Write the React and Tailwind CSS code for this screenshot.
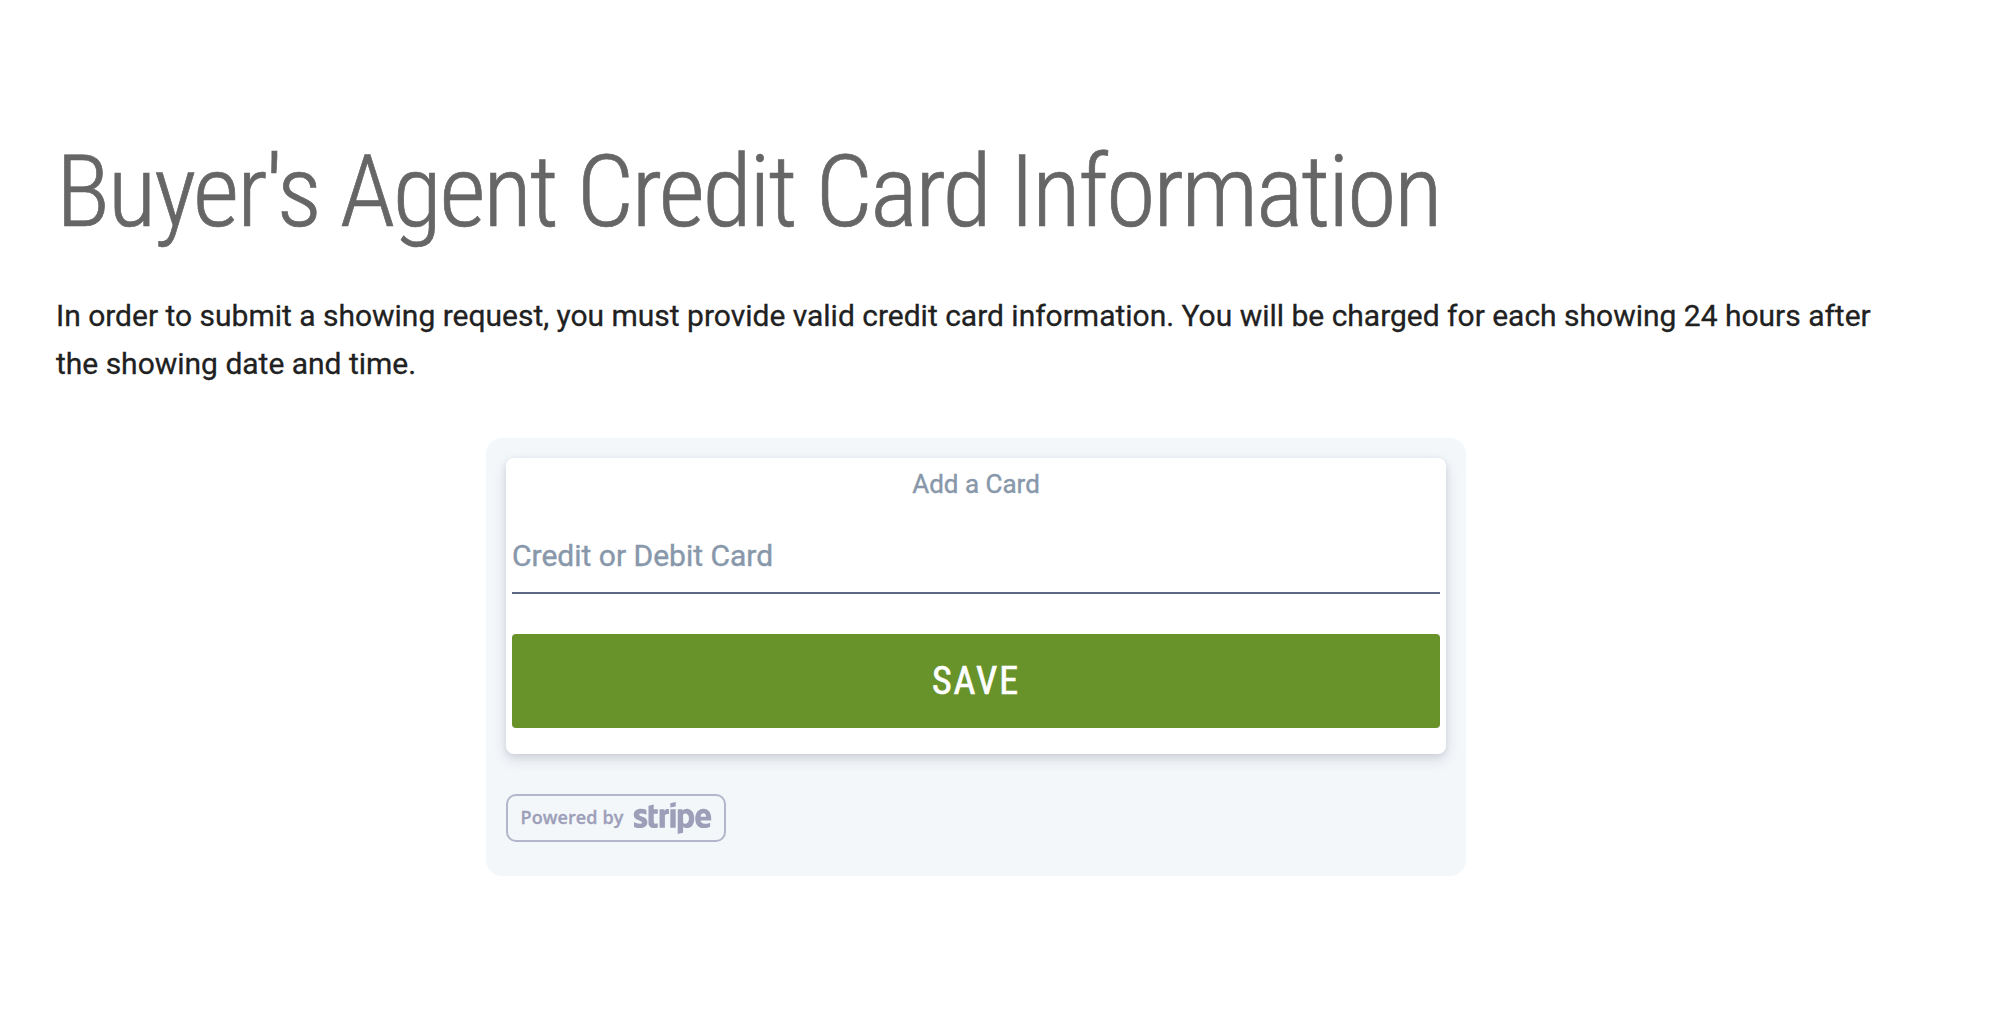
import { FaStripe } from 'react-icons/fa'

function StripeBadge() {
  return (
    <a href="#" className="mt-10 flex h-12 w-[220px] items-center rounded-[10px] border-2 border-[#b3b6cb] pl-[12.5px] text-[#9d9fb9]">
      <span className="-mt-0.5 font-['Open_Sans',sans-serif] text-[18px] leading-none font-semibold tracking-[0.1px] [-webkit-text-stroke:0.3px]">
        Powered by
      </span>
      <FaStripe aria-label="stripe" className="ml-[9.5px] h-[62px] w-[79px]" />
    </a>
  )
}

function CardForm() {
  return (
    <form className="h-[296px] rounded-lg bg-white px-[6px] shadow-[0_2px_6px_rgba(50,50,80,0.1),0_6px_14px_rgba(50,50,80,0.13)]">
      <h2 className="h-[72px] pt-1 text-center text-[26px] leading-[44px] text-[#8898aa] [-webkit-text-stroke:0.4px]">Add a Card</h2>
      <div className="flex h-16 items-center border-b-2 border-[#5c6886] text-[30px] leading-none text-[#8898aa] [-webkit-text-stroke:0.4px]">
        <span className="-mt-2.5">Credit or Debit Card</span>
      </div>
      <button
        type="button"
        className="mt-10 h-[94px] w-full rounded-[4px] bg-[#68932a] font-['Roboto_Condensed','Roboto',sans-serif] text-[38px] tracking-[2px] text-white [-webkit-text-stroke:0.7px]"
      >
        SAVE
      </button>
    </form>
  )
}

export default function App() {
  return (
    <main className="h-[1014px] w-full bg-white pt-[130px] pl-14 font-['Roboto',sans-serif]">
      <h1 className="font-['Roboto_Condensed','Roboto',sans-serif] text-[101px] leading-[124px] font-light tracking-[-2.43px] text-[#666] [-webkit-text-stroke:0.7px]">
        Buyer's Agent Credit Card Information
      </h1>
      <p className="mt-[38px] w-[1840px] text-[30px] leading-12 tracking-[-0.01px] text-[#212121] [-webkit-text-stroke:0.3px]">
        In order to submit a showing request, you must provide valid credit card information. You will be charged for each showing 24 hours after
        the showing date and time.
      </p>
      <section className="mt-[50px] ml-[430px] h-[438px] w-[980px] rounded-2xl bg-[#f3f7fa] p-5">
        <CardForm />
        <StripeBadge />
      </section>
    </main>
  )
}
